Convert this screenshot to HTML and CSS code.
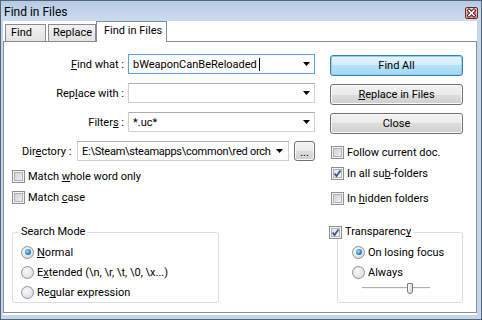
FILE: index.html
```html
<!doctype html>
<html lang="en">
<head>
	<meta charset="UTF-8">
	<title>Find in Files</title>
	<link rel="stylesheet" href="styles.css">
</head>
<body>
	<div class="window">
		<div class="titlebar">
			<span class="title">Find in Files</span>
			<span class="close-btn">
				<svg width="11" height="10" viewBox="0 0 11 10">
					<path d="M3 2.5L8 7.5M8 2.5L3 7.5" stroke="#4a1c18" stroke-width="3.4" stroke-linecap="square"/>
					<path d="M3 2.5L8 7.5M8 2.5L3 7.5" stroke="#fff" stroke-width="1.6" stroke-linecap="square"/>
				</svg>
			</span>
		</div>

		<div class="client">
			<div class="tabs">
				<div class="tab tab-find">Find</div>
				<div class="tab tab-replace">Replace</div>
				<div class="tab tab-active">Find in Files</div>
			</div>

			<div class="panel">
				<div class="left">
					<div class="field">
						<label class="field-label"><u>F</u>ind what :</label>
						<div class="combo focus">
							<span class="combo-text">bWeaponCanBeReloaded<span class="caret"></span></span>
							<svg class="arrow" width="7" height="4" viewBox="0 0 7 4"><path d="M0 0H7L3.5 4Z"/></svg>
						</div>
					</div>
					<div class="field">
						<label class="field-label">Rep<u>l</u>ace with :</label>
						<div class="combo">
							<span class="combo-text"></span>
							<svg class="arrow" width="7" height="4" viewBox="0 0 7 4"><path d="M0 0H7L3.5 4Z"/></svg>
						</div>
					</div>
					<div class="field">
						<label class="field-label">Filter<u>s</u> :</label>
						<div class="combo">
							<span class="combo-text">*.uc*</span>
							<svg class="arrow" width="7" height="4" viewBox="0 0 7 4"><path d="M0 0H7L3.5 4Z"/></svg>
						</div>
					</div>
					<div class="field field-dir">
						<label class="dir-label">Dir<u>e</u>ctory :</label>
						<div class="combo combo-dir">
							<span class="combo-text">E:\Steam\steamapps\common\red orch</span>
							<svg class="arrow" width="7" height="4" viewBox="0 0 7 4"><path d="M0 0H7L3.5 4Z"/></svg>
						</div>
						<button class="btn btn-dots" type="button">...</button>
					</div>

					<div class="check-row first"><span class="check"></span><span>Match <u>w</u>hole word only</span></div>
					<div class="check-row"><span class="check"></span><span>Match <u>c</u>ase</span></div>

					<fieldset class="group group-mode">
						<legend><span class="legend-inner">Search Mode</span></legend>
						<div class="radio-row"><span class="radio on"></span><span><u>N</u>ormal</span></div>
						<div class="radio-row"><span class="radio"></span><span>E<u>x</u>tended (\n, \r, \t, \0, \x...)</span></div>
						<div class="radio-row"><span class="radio"></span><span>Re<u>g</u>ular expression</span></div>
					</fieldset>
				</div>

				<div class="right">
					<button class="btn btn-default" type="button">Find All</button>
					<button class="btn" type="button"><u>R</u>eplace in Files</button>
					<button class="btn" type="button">Close</button>

					<div class="check-row follow"><span class="check"></span><span>Follow current doc.</span></div>
					<div class="check-row"><span class="check on"><svg width="11" height="11" viewBox="0 0 11 11"><path d="M2.5 5.5L4.5 8L8.5 2.5" fill="none" stroke="#3d5592" stroke-width="1.8"/></svg></span><span>In all su<u>b</u>-folders</span></div>
					<div class="check-row hidden-row"><span class="check"></span><span>In <u>h</u>idden folders</span></div>

					<fieldset class="group group-transp">
						<legend><span class="legend-inner"><span class="check on"><svg width="11" height="11" viewBox="0 0 11 11"><path d="M2.5 5.5L4.5 8L8.5 2.5" fill="none" stroke="#3d5592" stroke-width="1.8"/></svg></span><span>Transparenc<u>y</u></span></span></legend>
						<div class="radio-row"><span class="radio on"></span><span>On losing focus</span></div>
						<div class="radio-row"><span class="radio"></span><span>Always</span></div>
						<div class="slider">
							<div class="slider-track"></div>
							<div class="slider-thumb"></div>
						</div>
					</fieldset>
				</div>
			</div>
		</div>
	</div>
</body>
</html>
```

FILE: styles.css
```css
* {
	box-sizing: border-box;
	margin: 0;
	padding: 0;
}

body {
	font-family: Roboto, "Liberation Sans", sans-serif;
	font-size: 11px;
	color: #000;
	background: #fff;
}

u {
	text-decoration: underline;
	text-underline-offset: 1px;
	text-decoration-skip-ink: none;
}

.window {
	width: 482px;
	height: 320px;
	border: 1px solid #53667c;
	background: #c3d6ea;
	display: flex;
	flex-direction: column;
}

.titlebar {
	height: 20px;
	flex-shrink: 0;
	display: flex;
	align-items: center;
	justify-content: space-between;
	padding: 2px 3px 0 3px;
	background: linear-gradient(#b6cbe3, #cbdcef);
}

.title {
	font-size: 12px;
}

.close-btn {
	width: 13px;
	height: 12px;
	margin-top: 1px;
	display: flex;
	align-items: center;
	justify-content: center;
	border: 1px solid #6b2b25;
	border-radius: 2px;
	background: linear-gradient(#e9aaa0, #c9665a);
	box-shadow: inset 0 0 0 1px rgba(255, 255, 255, 0.45);
}

.client {
	flex: 1;
	margin: 0 4px 4px 2px;
	padding-bottom: 2px;
	background: #fff;
	display: flex;
	flex-direction: column;
}

/* tabs */
.tabs {
	height: 20px;
	flex-shrink: 0;
	display: flex;
	align-items: flex-end;
	padding-left: 2px;
}

.tab {
	height: 17px;
	border: 1px solid #898c95;
	border-bottom: none;
	background: linear-gradient(#f3f3f3, #e2e2e2);
	line-height: 16px;
	padding-left: 5px;
	white-space: nowrap;
	overflow: hidden;
}

.tab-find {
	width: 41px;
	margin-right: 2px;
}

.tab-replace {
	width: 48px;
	padding-left: 4px;
}

.tab-active {
	width: 71px;
	height: 21px;
	margin-bottom: -1px;
	padding-left: 7px;
	line-height: 18px;
	background: #fff;
	position: relative;
	z-index: 1;
}

.panel {
	flex: 1;
	border: 1px solid #898c95;
	display: flex;
	padding: 12px 0 0 8px;
}

.left {
	width: 303px;
}

.right {
	width: 133px;
	margin-left: 15px;
	padding-top: 1px;
	display: flex;
	flex-direction: column;
}

/* combo rows */
.field {
	display: flex;
	align-items: center;
	height: 20px;
	margin-bottom: 9px;
}

.field-label {
	width: 116px;
	padding-right: 4px;
	text-align: right;
}

.combo {
	width: 187px;
	height: 20px;
	border: 1px solid #cdd0d5;
	border-top-color: #abadb3;
	display: flex;
	align-items: center;
	gap: 4px;
	padding: 0 4px 0 4px;
	white-space: nowrap;
}

.combo.focus {
	border-color: #5e9fe0;
}

.combo-text {
	flex: 1;
	min-width: 0;
	display: flex;
	align-items: center;
}

.caret {
	display: inline-block;
	width: 1px;
	height: 13px;
	background: #000;
	margin-left: 2px;
}

.arrow {
	flex-shrink: 0;
}

.field-dir {
	margin-bottom: 0;
}

.dir-label {
	width: 55px;
	margin-left: 10px;
}

.combo-dir {
	width: 212px;
	padding-right: 5px;
	gap: 4px;
}

.combo-dir .combo-text {
	letter-spacing: -0.25px;
}

/* buttons */
.btn {
	font-family: inherit;
	font-size: 11px;
	color: #000;
	height: 21px;
	border: 1px solid #707070;
	border-radius: 3px;
	background: linear-gradient(#f2f2f2 0%, #ebebeb 50%, #dddddd 50%, #cfcfcf 100%);
	box-shadow: inset 0 0 0 1px #fbfbfb;
	margin-bottom: 8px;
}

.btn-default {
	border-color: #3c7fb1;
	background: linear-gradient(#e5f4fc 0%, #d3edfb 50%, #b5e1f8 50%, #a4d8f5 100%);
	box-shadow: inset 0 0 0 1px #8fd1f4;
}

.btn-dots {
	width: 21px;
	height: 20px;
	margin: 0 0 0 5px;
	line-height: 12px;
	padding-top: 3px;
}

/* checkboxes */
.check-row {
	height: 21px;
	display: flex;
	align-items: center;
	gap: 3px;
	white-space: nowrap;
}

.check-row.first {
	margin-top: 5px;
}

.check {
	width: 13px;
	height: 13px;
	flex-shrink: 0;
	border: 1px solid #8e8f8f;
	background: linear-gradient(135deg, #c6cad0, #f6f6f6);
	box-shadow: inset 0 0 0 1px #f4f4f4, inset 0 0 0 2px #aeb3b9;
	display: flex;
	align-items: center;
	justify-content: center;
}

.check.on {
	background: linear-gradient(135deg, #d9dde2, #fbfbfb);
}

.right .check-row {
	padding-left: 1px;
}

.right .hidden-row {
	margin-top: 4px;
}

/* group boxes */
.group {
	border: 1px solid #d5dfe5;
	border-radius: 3px;
	min-inline-size: 0;
}

.group legend {
	line-height: 14px;
	background: #fff;
}

.legend-inner {
	display: flex;
	align-items: center;
	gap: 3px;
	padding: 0 2px;
}

.group-mode {
	width: 207px;
	margin-top: 17px;
	padding: 3px 0 0 8px;
}

.group-mode legend {
	margin-left: -2px;
}

.group-transp {
	width: 126px;
	margin: 16px 0 0 7px;
	padding: 3px 0 7px 14px;
}

.group-transp legend {
	margin-left: -23px;
}

.group-transp .legend-inner {
	padding: 0 2px 0 0;
}

/* radios */
.radio-row {
	height: 20px;
	display: flex;
	align-items: center;
	gap: 3px;
	white-space: nowrap;
}

.radio {
	width: 13px;
	height: 13px;
	flex-shrink: 0;
	border-radius: 50%;
	border: 1px solid #8f9296;
	background: radial-gradient(circle at 40% 35%, #fafafa, #d3d6da);
	display: flex;
	align-items: center;
	justify-content: center;
}

.radio.on::after {
	content: "";
	width: 6px;
	height: 6px;
	border-radius: 50%;
	background: radial-gradient(circle at 40% 40%, #a5e2ff, #2b85cf 55%, #0d4479);
}

/* slider */
.slider {
	position: relative;
	width: 68px;
	height: 12px;
	margin: 1px 0 0 10px;
}

.slider-track {
	position: absolute;
	left: 0;
	right: 0;
	top: 4px;
	height: 2px;
	border-top: 1px solid #b0b0b0;
	border-bottom: 1px solid #f4f4f4;
	background: #e3e3e3;
}

.slider-thumb {
	position: absolute;
	left: 45px;
	top: 0;
	width: 6px;
	height: 11px;
	border: 1px solid #7d7d7d;
	border-radius: 1px 1px 3px 3px;
	background: linear-gradient(90deg, #fbfbfb, #dadada);
}
```
